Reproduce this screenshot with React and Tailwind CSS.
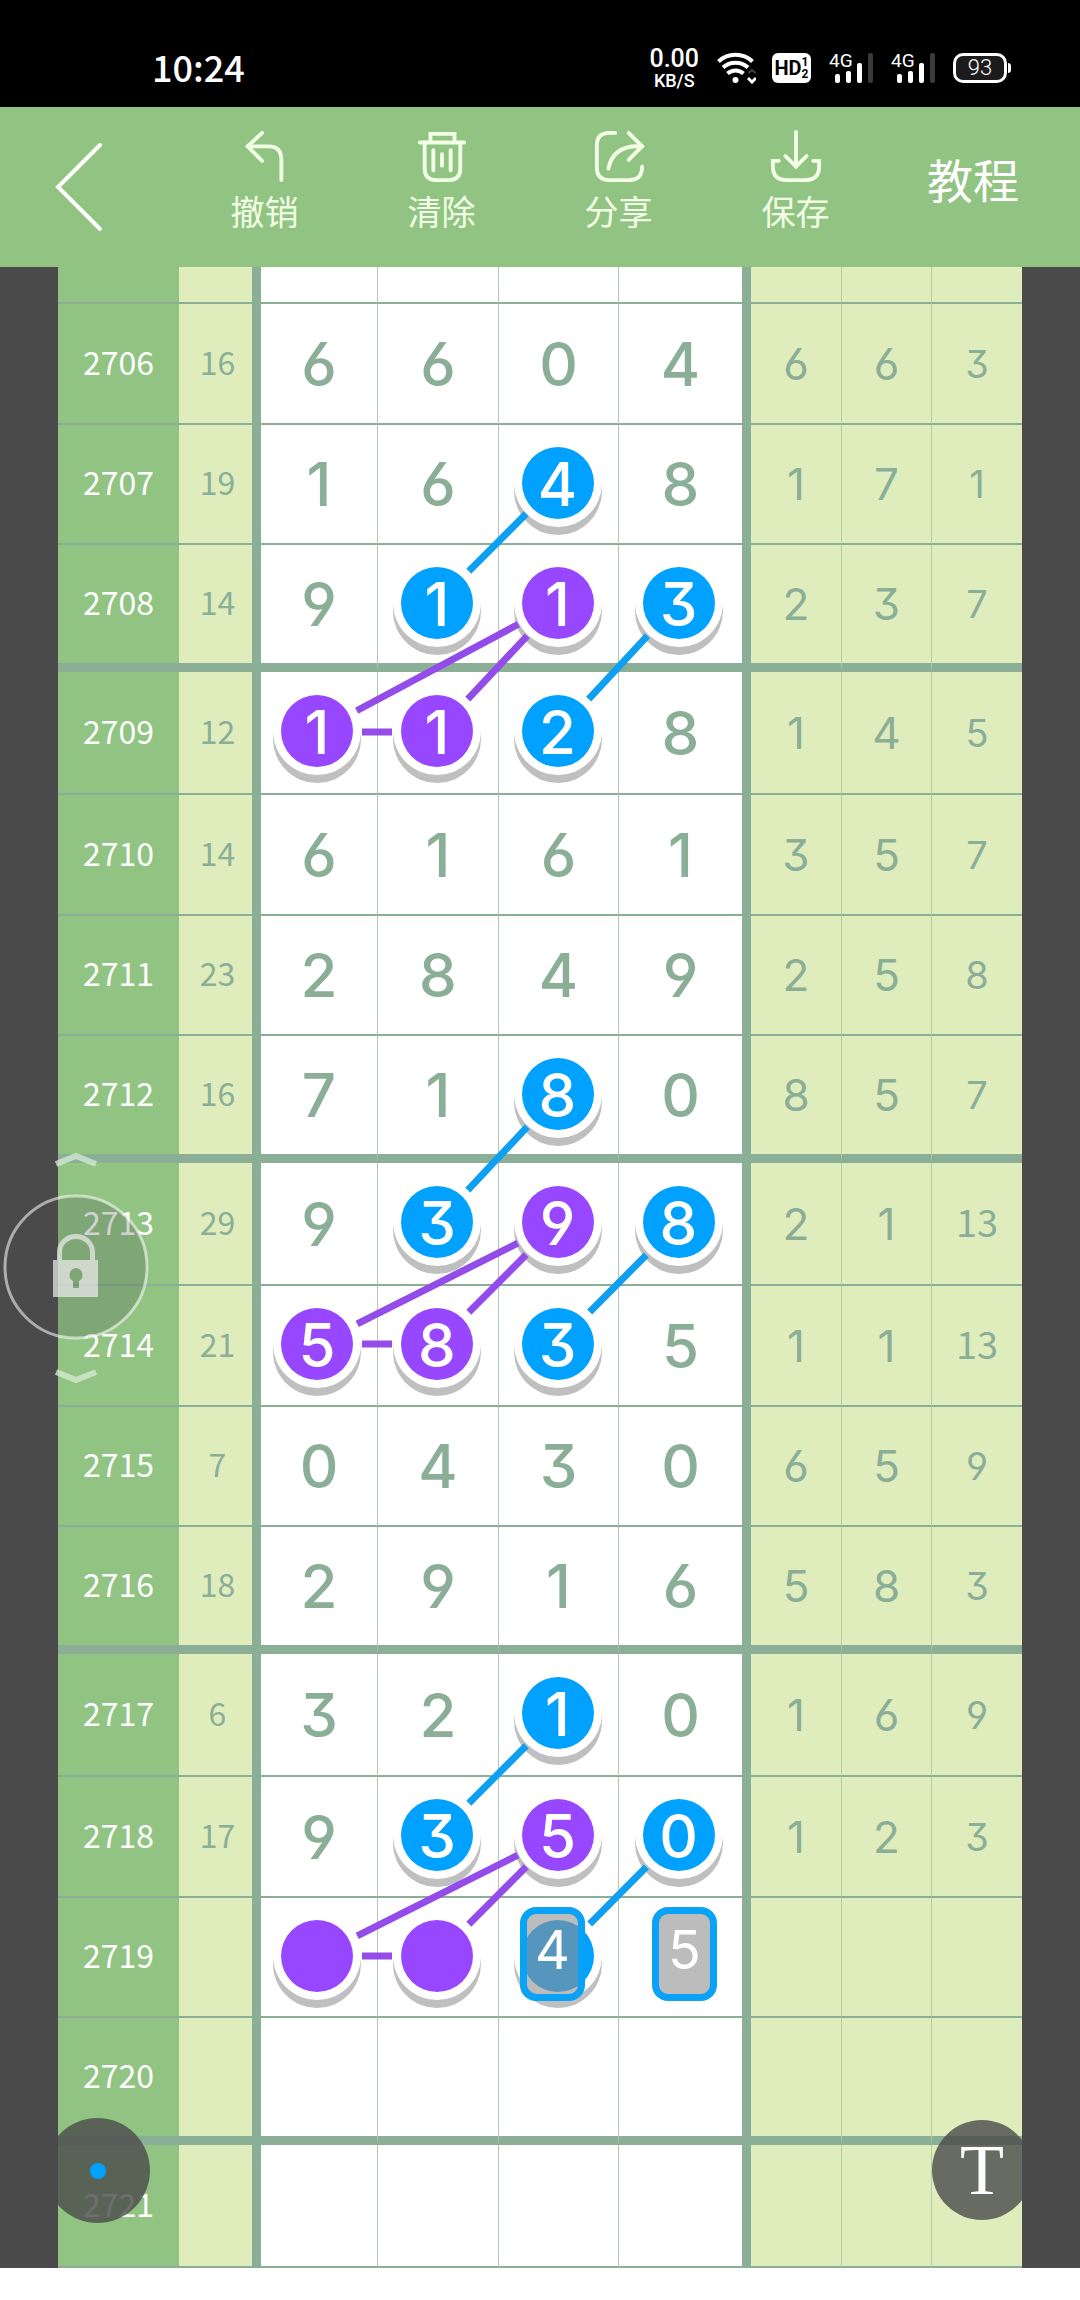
import clsx from "clsx";

const rows = [
  { id: "", sum: "", main: ["", "", "", ""], side: ["", "", ""], size: "top" },
  { id: "2706", sum: "16", main: ["6", "6", "0", "4"], side: ["6", "6", "3"], size: "middle" },
  { id: "2707", sum: "19", main: ["1", "6", "4", "8"], side: ["1", "7", "1"], marks: { 2: "blue" }, size: "short" },
  { id: "2708", sum: "14", main: ["9", "1", "1", "3"], side: ["2", "3", "7"], marks: { 1: "blue", 2: "purple", 3: "blue" }, size: "last" },
  { id: "2709", sum: "12", main: ["1", "1", "2", "8"], side: ["1", "4", "5"], marks: { 0: "purple", 1: "purple", 2: "blue" }, size: "first" },
  { id: "2710", sum: "14", main: ["6", "1", "6", "1"], side: ["3", "5", "7"], size: "middle" },
  { id: "2711", sum: "23", main: ["2", "8", "4", "9"], side: ["2", "5", "8"], size: "short" },
  { id: "2712", sum: "16", main: ["7", "1", "8", "0"], side: ["8", "5", "7"], marks: { 2: "blue" }, size: "last" },
  { id: "2713", sum: "29", main: ["9", "3", "9", "8"], side: ["2", "1", "13"], marks: { 1: "blue", 2: "purple", 3: "blue" }, size: "first" },
  { id: "2714", sum: "21", main: ["5", "8", "3", "5"], side: ["1", "1", "13"], marks: { 0: "purple", 1: "purple", 2: "blue" }, size: "middle" },
  { id: "2715", sum: "7", main: ["0", "4", "3", "0"], side: ["6", "5", "9"], size: "short" },
  { id: "2716", sum: "18", main: ["2", "9", "1", "6"], side: ["5", "8", "3"], size: "last" },
  { id: "2717", sum: "6", main: ["3", "2", "1", "0"], side: ["1", "6", "9"], marks: { 2: "blue" }, size: "first" },
  { id: "2718", sum: "17", main: ["9", "3", "5", "0"], side: ["1", "2", "3"], marks: { 1: "blue", 2: "purple", 3: "blue" }, size: "middle" },
  {
    id: "2719",
    sum: "",
    main: ["", "", "", ""],
    side: ["", "", ""],
    marks: { 0: "purple", 1: "purple", 2: "blue" },
    labels: { 2: "4", 3: "5" },
    size: "short",
  },
  { id: "2720", sum: "", main: ["", "", "", ""], side: ["", "", ""], size: "last" },
  { id: "2721", sum: "", main: ["", "", "", ""], side: ["", "", ""], size: "first" },
];

const rowHeights = {
  top: "h-[37px]",
  first: "h-[123px]",
  middle: "h-[121px]",
  short: "h-[120px]",
  last: "h-[127px]",
};

const ballColors = {
  blue: "bg-[#00a1ff]",
  purple: "bg-[#9747ff]",
};

const digitFont =
  "font-[Inter,'Noto_Sans_CJK_SC',sans-serif] [font-feature-settings:'cv03','cv04','cv09']";
const labelFont = "font-['Noto_Sans_CJK_SC',sans-serif]";

// centres of the four number columns, measured from the table's left edge
const colX = [259, 379, 500, 620];

// each group: y of the three rows that the links run through
const linkGroups = [
  [215, 336, 465],
  [827, 956, 1077],
  [1447, 1568, 1689],
];

const linkPairs = [
  { from: [2, 0], to: [1, 1], color: "#0f9ff0" },
  { from: [3, 1], to: [2, 2], color: "#0f9ff0" },
  { from: [2, 1], to: [0, 2], color: "#934be9" },
  { from: [2, 1], to: [1, 2], color: "#934be9" },
  { from: [0, 2], to: [1, 2], color: "#934be9" },
];

const RADIUS = 45;

function Link({ x1, y1, x2, y2, color }) {
  const length = Math.hypot(x2 - x1, y2 - y1);
  const dx = ((x2 - x1) / length) * RADIUS;
  const dy = ((y2 - y1) / length) * RADIUS;
  return (
    <line x1={x1 + dx} y1={y1 + dy} x2={x2 - dx} y2={y2 - dy} stroke={color} strokeWidth="7" />
  );
}

function Links() {
  return (
    <svg
      className="pointer-events-none absolute inset-0 h-full w-full"
      viewBox="0 0 964 2001"
      preserveAspectRatio="none"
      aria-hidden="true"
    >
      {linkGroups.map((ys, groupIndex) =>
        linkPairs.map((pair, pairIndex) => (
          <Link
            key={`${groupIndex}-${pairIndex}`}
            x1={colX[pair.from[0]]}
            y1={ys[pair.from[1]]}
            x2={colX[pair.to[0]]}
            y2={ys[pair.to[1]]}
            color={pair.color}
          />
        ))
      )}
    </svg>
  );
}

function Ball({ color, children }) {
  return (
    <span
      className={clsx(
        "mx-auto flex size-[72px] items-center justify-center rounded-full pt-0.5 text-white shadow-[0_0_0_8px_#fff,0_8px_0_8px_#c0bfc0]",
        ballColors[color]
      )}
    >
      {children}
    </span>
  );
}

function StatusBar() {
  return (
    <div className="flex h-[107px] items-center justify-between bg-black pr-[69px] pl-[152px] pt-[29px] text-white">
      <span className={clsx("pb-1 text-[36px] leading-none font-medium", labelFont)}>10:24</span>
      <div className={clsx("flex items-center", labelFont)}>
        <div className="mr-[18px] flex flex-col items-center font-[Roboto,sans-serif] font-medium">
          <span className="text-[25px] leading-[25px]">0.00</span>
          <span className="text-[18px] leading-[20px]">KB/S</span>
        </div>
        <svg className="mr-[16px] h-[32px] w-[39px]" viewBox="0 0 39 32" fill="none" aria-label="Wi-Fi">
          <path d="M1.5 9.5a25 25 0 0 1 34 0" stroke="#fff" strokeWidth="4" />
          <path d="M6 15.500a18.500 18.500 0 0 1 25 0" stroke="#fff" strokeWidth="4" />
          <path d="M10.500 21.500a12 12 0 0 1 16 0" stroke="#fff" strokeWidth="4" />
          <circle cx="18.500" cy="28" r="3" fill="#fff" />
          <path d="M31 26l4 4 4-4" stroke="#fff" strokeWidth="3" />
          <path d="M31.500 21l3.500-3 3.500 3" stroke="#444" strokeWidth="2" />
        </svg>
        <div className="mr-[18px] flex h-[30px] w-[39px] items-center justify-center rounded-md bg-white font-[Roboto,sans-serif] font-bold text-black">
          <span className="text-[20px] leading-none">HD</span>
          <span className="flex flex-col text-[12px] leading-[12px]">
            <span>1</span>
            <span>2</span>
          </span>
        </div>
        <Signal />
        <Signal />
        <div className="flex items-center">
          <div className="flex h-[30px] w-[54px] items-center justify-center rounded-[10px] border-[3px] border-white bg-[#1c1c1c] font-[Roboto,sans-serif] text-[22px] leading-none font-light">
            93
          </div>
          <span className="ml-px h-[10px] w-[3px] rounded-r bg-white" />
        </div>
      </div>
    </div>
  );
}

function Signal() {
  return (
    <div className="relative mr-[18px] h-[30px] w-[44px]">
      <svg className="h-full w-full" viewBox="0 0 44 30" aria-hidden="true">
        <rect x="6" y="21" width="5" height="9" rx="2" fill="#fff" />
        <rect x="17" y="18" width="5" height="12" rx="2" fill="#fff" />
        <rect x="28" y="10" width="5" height="20" rx="2" fill="#fff" />
        <rect x="39" y="0" width="5" height="30" rx="2" fill="#3a3a3a" />
      </svg>
      <span className="absolute top-0 left-0 font-[Roboto,sans-serif] text-[19px] leading-[16px]">4G</span>
    </div>
  );
}

const tools = [
  {
    label: "撤销",
    icon: (
      <>
        <path d="M23 3 8 17 23 32" />
        <path d="M8 17H30Q43 17 43 31V52" />
      </>
    ),
  },
  {
    label: "清除",
    icon: (
      <>
        <path d="M3 13H49M14 13V4H39V13" />
        <path d="M8 13V40Q8 52 20 52H33Q45 52 45 40V13" />
        <path d="M17 21V42M26 25V37M35 21V42" />
      </>
    ),
  },
  {
    label: "分享",
    icon: (
      <>
        <path d="M22 3H16Q3 3 3 16V39Q3 52 16 52H37Q50 52 50 38" />
        <path d="M15 40Q20 15 50 17" />
        <path d="M36 3 50 17 36 31" />
      </>
    ),
  },
  {
    label: "保存",
    icon: (
      <>
        <path d="M26 2V38" />
        <path d="M15 27 26 38 37 27" />
        <path d="M8 32H2V38Q2 52 16 52H36Q50 52 50 38V32H44" />
      </>
    ),
  },
];

function Toolbar() {
  return (
    <header
      className={clsx(
        "flex h-[160px] items-stretch bg-[#91c483] text-[#f3ffe6]",
        labelFont
      )}
    >
      <button type="button" aria-label="返回" className="flex w-[176px] items-center pl-[55px]">
        <svg className="h-[90px] w-[48px]" viewBox="0 0 48 90" fill="none" stroke="#fff" strokeWidth="4" strokeLinecap="round">
          <path d="M45 3 3 45 45 87" />
        </svg>
      </button>
      <nav className="grid flex-1 grid-cols-4">
        {tools.map((tool) => (
          <button key={tool.label} type="button" className="flex flex-col items-center gap-2 pt-[23px]">
            <svg
              className="h-[52px] w-[52px]"
              viewBox="0 0 52 54"
              fill="none"
              stroke="currentColor"
              strokeWidth="4"
              strokeLinecap="round"
            >
              {tool.icon}
            </svg>
            <span className="text-[34px] leading-[42px]">{tool.label}</span>
          </button>
        ))}
      </nav>
      <button type="button" className="w-[196px] pr-[18px] pb-[18px] text-[46px] leading-none text-white">
        教程
      </button>
    </header>
  );
}

function NumberCell({ row, index, line }) {
  const color = row.marks?.[index];
  const label = row.labels?.[index];
  return (
    <td
      className={clsx(
        "relative bg-white p-0 text-[60px] leading-none font-medium",
        line,
        index === 3 ? "border-r-[9px] border-r-[#8bae97]" : "border-r border-r-[#b4c6bc]",
        color && (index === 0 || index === 3 ? "pr-1 pb-[3px]" : "pr-0.5 pb-[3px]")
      )}
    >
      {color ? <Ball color={color}>{row.main[index]}</Ball> : row.main[index]}
      {label && (
        <button
          type="button"
          className={clsx(
            "absolute top-[9px] z-10 flex h-[94px] w-[65px] items-center justify-center rounded-[16px] border-[7px] border-[#0aa2f7] bg-[#909090]/60 pb-2 text-[54px] leading-none font-normal text-white",
            index === 3 ? "left-[33px]" : "left-[21px]"
          )}
        >
          {label}
        </button>
      )}
    </td>
  );
}

function TrendTable() {
  return (
    <div className="relative">
      <table
        className={clsx(
          "w-full table-fixed border-separate border-spacing-0 text-center text-[#8bae97]",
          digitFont
        )}
      >
        <colgroup>
          <col className="w-[121px]" />
          <col className="w-[82px]" />
          <col className="w-[117px]" />
          <col className="w-[121px]" />
          <col className="w-[120px]" />
          <col className="w-[132px]" />
          <col className="w-[91px]" />
          <col className="w-[90px]" />
          <col className="w-[90px]" />
        </colgroup>
        <tbody>
          {rows.map((row, rowIndex) => {
            const line =
              row.size === "last"
                ? "border-b-[9px] border-b-[#8bae97]"
                : "border-b-2 border-b-[#8bae97]";
            return (
              <tr key={rowIndex} className={rowHeights[row.size]}>
                <th
                  scope="row"
                  className={clsx("bg-[#91c483] p-0 pb-1.5 text-[32px] leading-none font-normal text-white", labelFont, line)}
                >
                  {row.id}
                </th>
                <td
                  className={clsx(
                    "border-r-[9px] border-r-[#8bae97] bg-[#dfedbd] p-0 pb-1.5 pl-1 text-[32px] leading-none",
                    labelFont,
                    line
                  )}
                >
                  {row.sum}
                </td>
                {row.main.map((_, index) => (
                  <NumberCell key={index} row={row} index={index} line={line} />
                ))}
                {row.side.map((value, index) => (
                  <td
                    key={index}
                    className={clsx(
                      "bg-[#dfedbd] p-0 leading-none",
                      line,
                      index === 2 ? "text-[38px]" : "border-r border-r-[#b4cfa6] text-[44px]",
                      value.length > 1 && labelFont,
                      value.length > 1 && "pb-1.5"
                    )}
                  >
                    {value}
                  </td>
                ))}
              </tr>
            );
          })}
        </tbody>
      </table>
      <Links />
    </div>
  );
}

function LockHandle() {
  return (
    <button type="button" aria-label="锁定" className="absolute top-[883px] left-0">
      <svg className="h-[236px] w-[152px]" viewBox="0 0 152 236" fill="none">
        <g stroke="#dcefdc" strokeOpacity="0.7" strokeWidth="6">
          <path d="M56 14 76 6 96 14" />
          <path d="M56 222 76 230 96 222" />
        </g>
        <circle cx="76" cy="117" r="71" fill="#4a4a4a" fillOpacity="0.25" stroke="#fff" strokeOpacity="0.55" strokeWidth="3" />
        <g fill="#eee" fillOpacity="0.7">
          <path fillRule="evenodd" d="M53 110H98V147H53ZM76 118a7 7 0 0 0-3 13v7h6v-7a7 7 0 0 0-3-13Z" />
          <path d="M57 110V102a19 18 0 0 1 38 0V110H90V102a14 13 0 0 0-28 0V110Z" />
        </g>
      </svg>
    </button>
  );
}

export default function App() {
  return (
    <div className="min-h-screen bg-white">
      <StatusBar />
      <Toolbar />
      <main className="relative bg-[#4a4a4a] px-[58px]">
        <TrendTable />
        <LockHandle />
        <button
          type="button"
          aria-label="颜色"
          className="absolute bottom-[45px] left-[45px] flex size-[105px] items-center justify-center rounded-full bg-[#4a4a4a]/80"
        >
          <span className="size-4 rounded-full bg-[#00a1ff]" />
        </button>
        <button
          type="button"
          aria-label="文字"
          className="absolute right-[48px] bottom-[48px] flex size-[100px] items-center justify-center rounded-full bg-[#4a4a4a]/80 font-['Liberation_Serif',serif] text-[72px] leading-none text-white"
        >
          T
        </button>
      </main>
    </div>
  );
}
